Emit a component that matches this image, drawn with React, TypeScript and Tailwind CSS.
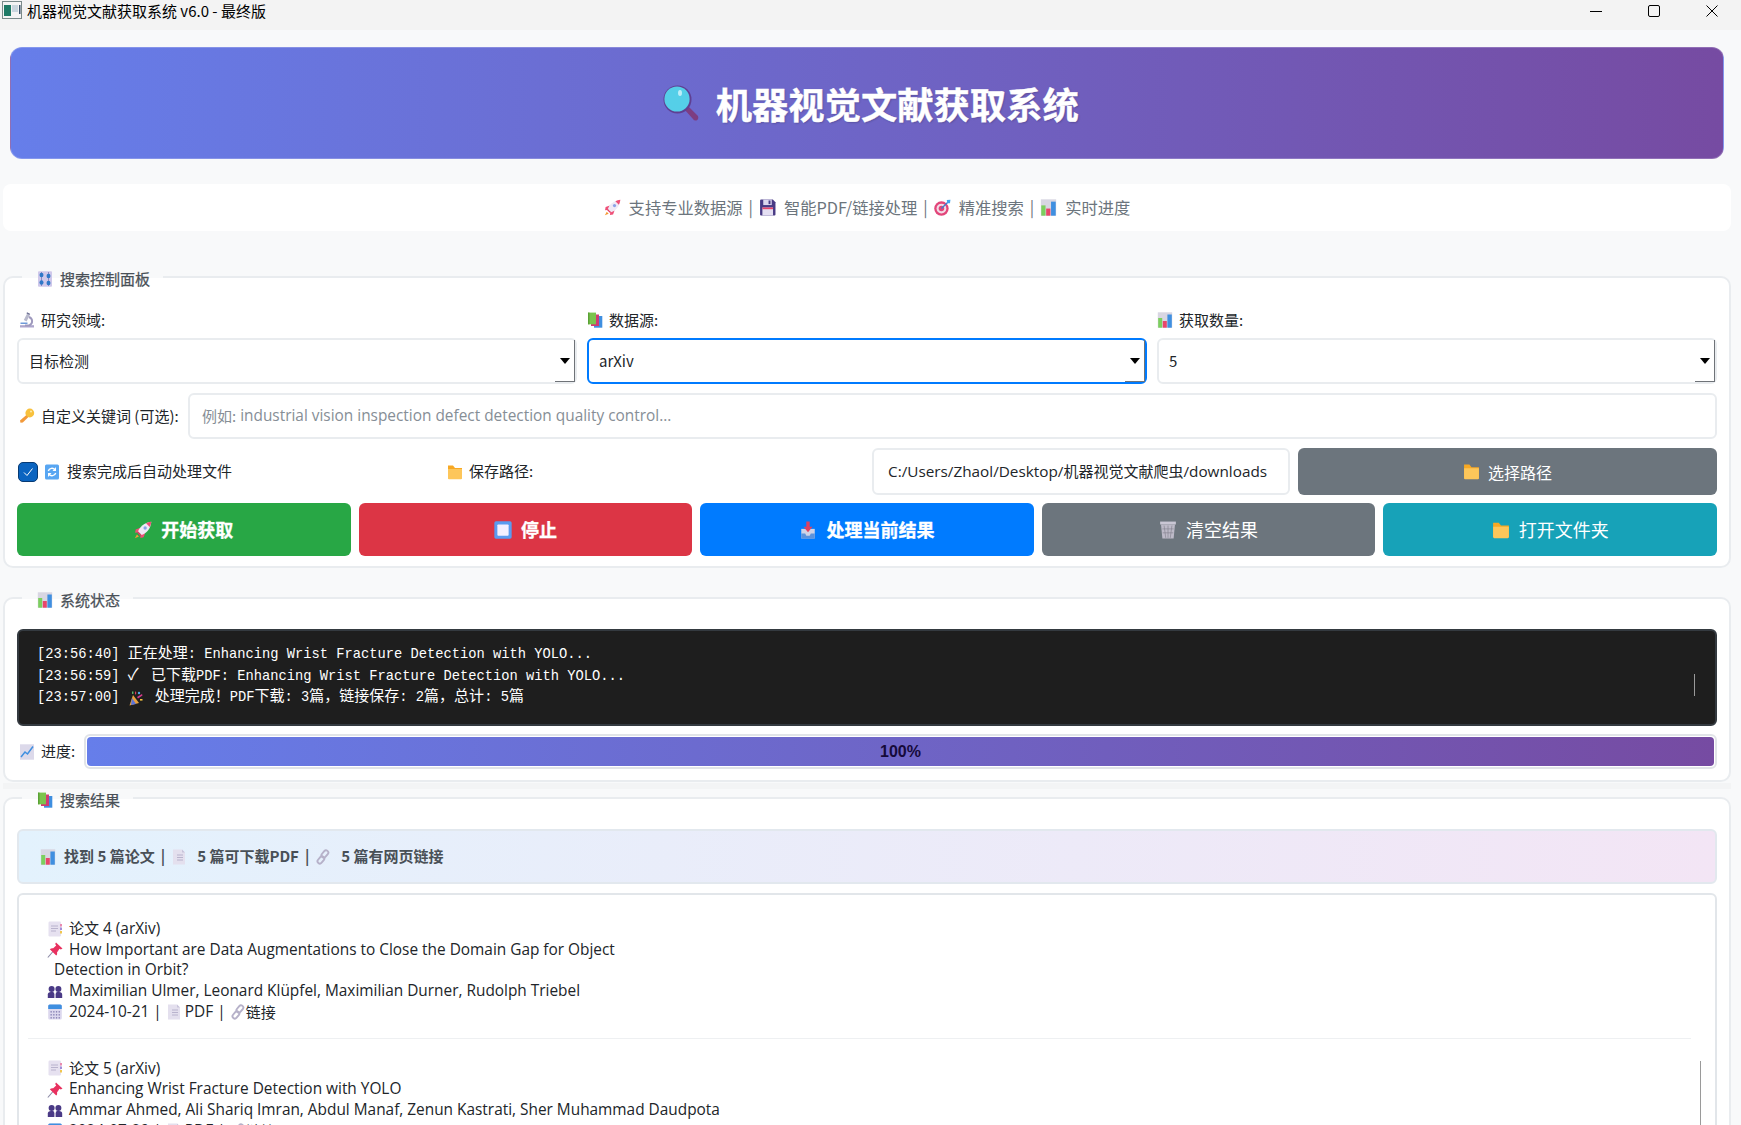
import type { ReactNode } from 'react';

type IconProps = { className?: string };

const box = 'inline-block shrink-0 w-[16px] h-[16px]';
const big = 'inline-block shrink-0 w-[17px] h-[17px]';
const btn = 'inline-block shrink-0 w-[18px] h-[18px]';

function Rocket({ className = box }: IconProps) {
  return (
    <svg viewBox="0 0 16 16" className={className}>
      <path d="M2.6 12 L0.8 15.4 L4.4 13.8 Z" fill="#f59a35" />
      <path d="M5.5 6 L1.5 7.5 L1 10.5 L4.5 10 Z" fill="#ef4f77" />
      <path d="M10 10.5 L8.5 14.5 L5.6 15 L6 11.5 Z" fill="#ef4f77" />
      <path d="M3.6 9.4 C5 5 9 1.6 15.4 0.6 C14.8 7 11 11 6.7 12.4 Z" fill="#efeaf6" />
      <path d="M15.4 0.6 C15.2 2.4 14.7 4 14 5.4 L10.7 2 C12.1 1.3 13.7 0.8 15.4 0.6 Z" fill="#ef4f77" />
      <path d="M3.6 9.4 L6.7 12.4 L5.4 13 L3 10.6 Z" fill="#e23a66" />
      <circle cx="9.9" cy="6.2" r="1.5" fill="#8aa2e6" />
    </svg>
  );
}

function Floppy({ className = box }: IconProps) {
  return (
    <svg viewBox="0 0 16 16" className={className}>
      <path d="M1 1.5 Q1 0.5 2 0.5 H13 L15.5 3 V14.5 Q15.5 15.5 14.5 15.5 H2 Q1 15.5 1 14.5 Z" fill="#483a85" />
      <rect x="4" y="0.5" width="8" height="5.2" fill="#dcd6ee" />
      <rect x="9" y="1.4" width="1.8" height="3.4" fill="#483a85" />
      <rect x="3.2" y="8" width="10" height="7.5" fill="#e4dff2" />
      <rect x="3.2" y="8" width="10" height="1.6" fill="#e8456a" />
    </svg>
  );
}

function Target({ className = box }: IconProps) {
  return (
    <svg viewBox="0 0 16 16" className={className}>
      <circle cx="7" cy="9" r="6.8" fill="#e2457a" />
      <circle cx="7" cy="9" r="4.6" fill="#f2dbe6" />
      <circle cx="7" cy="9" r="2.6" fill="#e2457a" />
      <path d="M7 9 L13 3" stroke="#3d7fd0" strokeWidth="1.2" />
      <path d="M12 1 L15.5 0.8 L15 4 L12.5 4 Z" fill="#41a5ee" />
    </svg>
  );
}

function Bars({ className = box }: IconProps) {
  return (
    <svg viewBox="0 0 16 16" className={className}>
      <rect x="0.8" y="0.3" width="14.4" height="15.4" fill="#d8d6e2" />
      <rect x="1.2" y="6" width="4" height="9.7" fill="#7ccf5e" />
      <rect x="5.8" y="9" width="4" height="6.7" fill="#e8456a" />
      <rect x="10.4" y="2.5" width="4.4" height="13.2" fill="#3f8fe0" />
    </svg>
  );
}

function Knobs({ className = box }: IconProps) {
  return (
    <svg viewBox="0 0 16 16" className={className}>
      <rect x="1" y="0.3" width="14" height="15.4" rx="1" fill="#cfc8ea" />
      {[4.5, 11.5].map((x) => (
        <g key={x}>
          <rect x={x - 0.4} y="1" width="0.8" height="14" fill="#7d78b5" />
          <ellipse cx={x} cy={x === 4.5 ? 4 : 5} rx="2" ry="2.3" fill="#2f78c8" />
          <ellipse cx={x} cy={x === 4.5 ? 11.5 : 12} rx="2" ry="2.3" fill="#2f78c8" />
        </g>
      ))}
    </svg>
  );
}

function Microscope({ className = box }: IconProps) {
  return (
    <svg viewBox="0 0 16 16" className={className}>
      <path d="M1 13.2 H15 V15.5 H1 Z" fill="#aca5cc" />
      <path d="M8.5 0.8 L11.2 2.2 L7.6 9.4 L4.8 8 Z" fill="#b8b9cc" />
      <path d="M10 5 C14 6.5 14.2 11.4 10.4 13.4 H6" fill="none" stroke="#9e99bd" strokeWidth="1.9" />
      <path d="M1.5 10.5 H8.5 V12 H1.5 Z" fill="#6f9ad8" />
      <path d="M8 0.3 L11 1.7 L10.5 2.8 L7.5 1.4 Z" fill="#6c6f92" />
    </svg>
  );
}

function Books({ className = box }: IconProps) {
  return (
    <svg viewBox="0 0 16 16" className={className}>
      <rect x="7" y="4" width="8.3" height="11.7" fill="#3f8fe0" />
      <rect x="4" y="2.5" width="8" height="11.5" fill="#d13a72" />
      <rect x="1" y="0.6" width="8" height="11.7" fill="#7cc44e" />
      <rect x="1" y="0.6" width="1.5" height="11.7" fill="#5aa235" />
    </svg>
  );
}

function KeyIcon({ className = box }: IconProps) {
  return (
    <svg viewBox="0 0 16 16" className={className}>
      <path d="M8.5 6 L1 12.5 L1.5 14.8 L3.8 14.6 L10.5 8 Z" fill="#f2993a" />
      <circle cx="10.8" cy="5" r="4.4" fill="#f8c13d" />
      <circle cx="12" cy="3.6" r="1" fill="#fbe9b0" />
    </svg>
  );
}

function Cycle({ className = box }: IconProps) {
  return (
    <svg viewBox="0 0 16 16" className={className}>
      <rect x="1" y="0.5" width="14" height="15" rx="1.5" fill="#58a6f2" />
      <path d="M4.3 7 A3.8 3.8 0 0 1 11 5.8" fill="none" stroke="#fff" strokeWidth="1.4" />
      <path d="M12 3 V7 H8.5 Z" fill="#fff" />
      <path d="M11.7 9 A3.8 3.8 0 0 1 5 10.2" fill="none" stroke="#fff" strokeWidth="1.4" />
      <path d="M4 13 V9 H7.5 Z" fill="#fff" />
    </svg>
  );
}

function Folder({ className = box }: IconProps) {
  return (
    <svg viewBox="0 0 16 16" className={className}>
      <path d="M1 1.5 H6 L8 4 H15 V14.5 H1 Z" fill="#f7a823" />
      <path d="M1 5 H15 V14 Q15 15.3 14 15.3 H2 Q1 15.3 1 14 Z" fill="#fdc65a" />
    </svg>
  );
}

function StopIcon({ className = box }: IconProps) {
  return (
    <svg viewBox="0 0 16 16" className={className}>
      <rect x="0.3" y="0.3" width="15.4" height="15.4" rx="1.5" fill="#5a9bf0" />
      <rect x="3" y="3" width="10" height="10" rx="0.8" fill="#f4f0ff" />
    </svg>
  );
}

function Inbox({ className = box }: IconProps) {
  return (
    <svg viewBox="0 0 16 16" className={className}>
      <path d="M2 7 H14 V15.5 H2 Z" fill="#cfd3e6" />
      <path d="M2 11 H5.5 L6.5 13 H9.5 L10.5 11 H14 V15.5 H2 Z" fill="#5b93dd" />
      <path d="M6.5 0.5 H9.5 V5 H12 L8 10 L4 5 H6.5 Z" fill="#e2405f" />
    </svg>
  );
}

function Trash({ className = box }: IconProps) {
  return (
    <svg viewBox="0 0 16 16" className={className}>
      <rect x="1" y="0.5" width="14" height="2.6" fill="#c9c6d4" />
      <path d="M1.8 3 H14.2 L13 15.5 H3 Z" fill="#bdbac8" />
      <path d="M4.5 4 L6 15 M8 4 V15 M11.5 4 L10 15 M3 7 H13 M3.3 10.5 H12.7" stroke="#85838f" strokeWidth="0.6" />
    </svg>
  );
}

function Party({ className = box }: IconProps) {
  return (
    <svg viewBox="0 0 16 16" className={className}>
      <path d="M5 5 L11 13 L1.5 15.5 Z" fill="#e8a13c" />
      <path d="M4 8 L8 14 L3 15 Z" fill="#5b73d8" />
      <path d="M7 1 L8.5 3 L7 5 Z" fill="#e2405f" />
      <circle cx="11" cy="3" r="1.2" fill="#4fa8e8" />
      <path d="M9 7 L14 4 L14.5 5.5 L10 8.5 Z" fill="#d53a8a" />
      <rect x="12" y="9" width="2.5" height="1.6" fill="#f3c23f" />
      <rect x="4" y="1.5" width="1.4" height="2.4" fill="#59bb6a" />
    </svg>
  );
}

function Trend({ className = box }: IconProps) {
  return (
    <svg viewBox="0 0 16 16" className={className}>
      <rect x="1" y="0.3" width="14" height="15.4" fill="#dcd9ea" />
      <path d="M2 13 L6 8 L8.5 10 L14 2.5" fill="none" stroke="#3f8fe0" strokeWidth="1.5" />
    </svg>
  );
}

function Page({ className = box }: IconProps) {
  return (
    <svg viewBox="0 0 16 16" className={className}>
      <path d="M2 0.5 H11 L14 3.5 V15.5 H2 Z" fill="#e4e0ee" />
      <path d="M11 0.5 L14 3.5 H11 Z" fill="#c8c3da" />
      <path d="M6 6 H12 M6 8.5 H12 M6 11 H12" stroke="#b3aec8" strokeWidth="0.9" />
    </svg>
  );
}

function Tabs({ className = box }: IconProps) {
  return (
    <svg viewBox="0 0 16 16" className={className}>
      <rect x="1.5" y="0.5" width="12.5" height="15" rx="1.2" fill="#e6e1f0" />
      <path d="M4 5 H11 M4 7.5 H11 M4 10 H9" stroke="#b3aec8" strokeWidth="0.9" />
      <rect x="13" y="3" width="2" height="2.5" fill="#e98bb0" />
      <rect x="13" y="6.5" width="2" height="2.5" fill="#a08ed8" />
      <rect x="13" y="10" width="2" height="2.5" fill="#f0c64f" />
    </svg>
  );
}

function LinkIcon({ className = box }: IconProps) {
  return (
    <svg viewBox="0 0 16 16" className={className}>
      <g fill="none" stroke="#b6b1c9" strokeWidth="1.9">
        <rect x="7.6" y="1" width="4.6" height="8" rx="2.3" transform="rotate(40 10 5)" />
        <rect x="3.6" y="7" width="4.6" height="8" rx="2.3" transform="rotate(40 6 11)" />
      </g>
    </svg>
  );
}

function Pin({ className = box }: IconProps) {
  return (
    <svg viewBox="0 0 16 16" className={className}>
      <path d="M0.8 15.5 L6 9.5" stroke="#8c8aa6" strokeWidth="1.1" />
      <path d="M9 0.5 L15.5 6.5 L13.8 7.6 L12.5 6.8 L10 10.5 C10.4 12 10 13 9.2 13.6 L2.8 7.2 C3.8 6.2 5 6 6.2 6.2 L9.2 3.6 L8.2 2 Z" fill="#e8315f" />
    </svg>
  );
}

function Users({ className = box }: IconProps) {
  return (
    <svg viewBox="0 0 16 16" className={className}>
      <g fill="#4a3a86">
        <circle cx="4.6" cy="6" r="3" />
        <circle cx="11.4" cy="6" r="3" />
        <path d="M0.8 15 V11.5 Q0.8 9 4 9 H6 Q7.4 9 7.4 11.5 V15 Z" />
        <path d="M8.6 15 V11.5 Q8.6 9 10 9 H12 Q15.2 9 15.2 11.5 V15 Z" />
      </g>
    </svg>
  );
}

function Calendar({ className = box }: IconProps) {
  return (
    <svg viewBox="0 0 16 16" className={className}>
      <rect x="1.2" y="0.5" width="13.6" height="15" rx="1.5" fill="#dcd8ee" />
      <path d="M1.2 2 Q1.2 0.5 2.7 0.5 H13.3 Q14.8 0.5 14.8 2 V5 H1.2 Z" fill="#3f8fe0" />
      {[4, 7, 10].map((y) =>
        [3.5, 6.2, 8.9, 11.6].map((x) => <rect key={`${x}-${y + 3}`} x={x} y={y + 3} width="1.3" height="1.6" fill="#8e88b8" />)
      )}
    </svg>
  );
}

function TitleLens() {
  return (
    <svg viewBox="0 0 36 36" className="w-[36px] h-[36px] shrink-0">
      <path d="M21 24 L25 21 L35 31 Q36 34 33.5 35.5 Q31 36 30 34 Z" fill="#7d3d82" />
      <circle cx="14.5" cy="14.5" r="14" fill="#5f3f92" />
      <circle cx="14" cy="14" r="12.6" fill="#55cfe8" />
      <ellipse cx="17" cy="8" rx="2" ry="3" fill="#bdeef8" />
    </svg>
  );
}

function AppIcon() {
  return (
    <svg viewBox="0 0 20 18" className="w-[20px] h-[18px] shrink-0">
      <rect x="0.5" y="0.5" width="19" height="17" fill="#f4f4f4" stroke="#7a8a8a" />
      <rect x="2" y="4" width="7" height="11" fill="#1e7a66" />
      <rect x="10" y="4" width="6" height="7" fill="#c9d6de" />
      <rect x="17" y="4" width="1.5" height="9" fill="#38506a" />
    </svg>
  );
}

function Legend({ icon, children }: { icon: ReactNode; children: ReactNode }) {
  return (
    <div className="absolute left-[17px] top-[-9px] h-[20px] pl-[15px] pr-[13px] flex items-center gap-[7px] bg-[linear-gradient(to_bottom,#f8f9fa_0,#f8f9fa_9px,#ffffff_9px)] text-[15px] text-[#495057] [-webkit-text-stroke:0.25px_#495057]">
      {icon}
      <span>{children}</span>
    </div>
  );
}

function FieldLabel({ icon, children, className = '' }: { icon: ReactNode; children: ReactNode; className?: string }) {
  return (
    <div className={`flex items-center gap-[6px] h-[20px] text-[15px] text-[#212529] ${className}`}>
      {icon}
      <span>{children}</span>
    </div>
  );
}

function SelectBox({ value, focused }: { value: string; focused?: boolean }) {
  return (
    <div
      className={`mt-[8px] h-[46px] flex items-stretch rounded-[6px] border-2 bg-white text-[15px] text-[#212529] ${
        focused ? 'border-[#007bff]' : 'border-[#e9ecef]'
      }`}
    >
      <div className="flex-1 flex items-center pl-[10px]">{value}</div>
      <div className="w-[20px] flex items-center justify-center border-r-[1.5px] border-b-[1.5px] border-[#6f7378]">
        <div className="w-0 h-0 border-l-[5px] border-r-[5px] border-t-[6px] border-l-transparent border-r-transparent border-t-black" />
      </div>
    </div>
  );
}

function ActionButton({
  icon,
  label,
  color,
  bold,
}: {
  icon: ReactNode;
  label: string;
  color: string;
  bold?: boolean;
}) {
  return (
    <button
      className={`h-[53px] rounded-[6px] flex items-center justify-center gap-[9px] text-white text-[18px] ${color} ${
        bold ? 'font-bold [-webkit-text-stroke:0.3px_#ffffff]' : ''
      }`}
    >
      {icon}
      <span>{label}</span>
    </button>
  );
}

function Sep({ className = 'mx-[4px]' }: { className?: string }) {
  return <span className={className}>|</span>;
}

function Paper({ no, title, authors, date }: { no: number; title: string[]; authors: string; date: string }) {
  return (
    <div className="text-[15.4px] leading-[20.7px] text-[#212529] font-['Open_Sans','Noto_Sans_CJK_SC',sans-serif]">
      <div className="flex items-center gap-[6px]">
        <Tabs />
        <span>
          <span className="text-[15px]">论文</span> {no} (arXiv)
        </span>
      </div>
      <div className="flex items-center gap-[6px]">
        <Pin />
        <span>{title[0]}</span>
      </div>
      {title[1] && <div className="ml-[7px]">{title[1]}</div>}
      <div className="flex items-center gap-[6px]">
        <Users />
        <span>{authors}</span>
      </div>
      <div className="flex items-center gap-[6px]">
        <Calendar />
        <span className="flex items-center">
          {date}
          <Sep />
          <Page />
          <span className="ml-[3px]">PDF</span>
          <Sep />
          <LinkIcon />
          <span className="text-[15px]">链接</span>
        </span>
      </div>
    </div>
  );
}

export default function App() {
  return (
    <div className="w-[1741px] h-[1125px] overflow-hidden bg-[#f8f9fa] font-['Noto_Sans_CJK_SC','Noto_Sans',sans-serif]">
      {/* title bar */}
      <div className="h-[30px] bg-[#f3f3f3] flex items-start pl-[2px] pt-[1px] text-[15px] leading-[20px] text-black">
        <AppIcon />
        <span className="ml-[5px]">机器视觉文献获取系统 v6.0 - 最终版</span>
        <div className="ml-auto h-[20px] flex items-center gap-[46px] pr-[23px] text-black">
          <div className="w-[12px] h-[1px] bg-black" />
          <div className="w-[12px] h-[12px] border border-black rounded-[2px]" />
          <svg viewBox="0 0 12 12" className="w-[12px] h-[12px]">
            <path d="M0.5 0.5 L11.5 11.5 M11.5 0.5 L0.5 11.5" stroke="#000" strokeWidth="1" />
          </svg>
        </div>
      </div>

      <div className="pl-[3px] pr-[10px]">
        {/* banner */}
        <div className="mt-[17px] ml-[6.5px] mr-[7px] h-[112px] pl-[8px] rounded-[12px] border border-white/20 bg-[linear-gradient(90deg,#667eea,#764ba2)] flex items-center justify-center gap-[17px]">
          <TitleLens />
          <h1 className="text-[36.3px] font-bold text-white [-webkit-text-stroke:0.4px_#ffffff] [text-shadow:1px_1px_2px_rgba(0,0,0,0.2)]">机器视觉文献获取系统</h1>
        </div>

        <div className="mt-[25px] h-[47px] rounded-[8px] bg-white flex items-center justify-center text-[16.3px] text-[#6c757d]">
          <Rocket className={big} />
          <span className="ml-[8px]">支持专业数据源</span>
          <Sep className="mx-[6px]" />
          <Floppy className={big} />
          <span className="ml-[8px]">智能PDF/链接处理</span>
          <Sep className="mx-[6px]" />
          <Target className={big} />
          <span className="ml-[8px]">精准搜索</span>
          <Sep className="mx-[6px]" />
          <Bars className={big} />
          <span className="ml-[8px]">实时进度</span>
        </div>

        {/* search panel */}
        <section className="relative mt-[45px] border-2 border-[#e9ecef] rounded-[10px] bg-white px-[12px] pt-[32px] pb-[10px]">
          <Legend icon={<Knobs />}>搜索控制面板</Legend>
          <div className="grid grid-cols-3 gap-[10px]">
            <div>
              <FieldLabel icon={<Microscope />} className="pl-[2px]">研究领域:</FieldLabel>
              <SelectBox value="目标检测" />
            </div>
            <div>
              <FieldLabel icon={<Books />}>数据源:</FieldLabel>
              <SelectBox value="arXiv" focused />
            </div>
            <div>
              <FieldLabel icon={<Bars />}>获取数量:</FieldLabel>
              <SelectBox value="5" />
            </div>
          </div>

          <div className="mt-[9px] h-[46px] flex items-center">
            <FieldLabel icon={<KeyIcon />} className="pl-[2px] w-[171px] shrink-0">自定义关键词 (可选):</FieldLabel>
            <div className="flex-1 h-full rounded-[6px] border-2 border-[#e9ecef] bg-white flex items-center pl-[12px] text-[15.4px] text-[#868e96] font-['Open_Sans','Noto_Sans_CJK_SC',sans-serif]">
              <span className="text-[15px] font-['Noto_Sans_CJK_SC',sans-serif]">例如:</span>&nbsp;industrial vision inspection defect detection quality control...
            </div>
          </div>

          <div className="mt-[9px] h-[47px] flex items-center">
            <div className="w-[430px] shrink-0 flex items-center pl-[1px] gap-[6px] text-[15px] text-[#212529]">
              <span className="w-[20px] h-[20px] rounded-[5px] bg-[#0b64c0] border border-[#073a73] flex items-center justify-center">
                <svg viewBox="0 0 12 12" className="w-[12px] h-[12px]">
                  <path d="M2 6.5 L5 9.5 L10.5 2.5" fill="none" stroke="#fff" strokeWidth="1" />
                </svg>
              </span>
              <Cycle />
              <span className="ml-[1px]">搜索完成后自动处理文件</span>
            </div>
            <FieldLabel icon={<Folder />} className="w-[425px] shrink-0">保存路径:</FieldLabel>
            <div className="w-[418px] h-full rounded-[6px] border-2 border-[#e9ecef] bg-white flex items-center pl-[14px] text-[15.3px] text-[#212529] whitespace-nowrap font-['Open_Sans','Noto_Sans_CJK_SC',sans-serif]">
              C:/Users/Zhaol/Desktop/<span className="text-[15px]">机器视觉文献爬虫</span>/downloads
            </div>
            <button className="ml-[8px] flex-1 h-full rounded-[6px] bg-[#6c757d] flex items-center justify-center gap-[8px] text-[16px] text-white">
              <Folder className={big} />
              <span>选择路径</span>
            </button>
          </div>

          <div className="mt-[8px] grid grid-cols-5 gap-[8px]">
            <ActionButton icon={<Rocket className={btn} />} label="开始获取" color="bg-[#28a745]" bold />
            <ActionButton icon={<StopIcon className={btn} />} label="停止" color="bg-[#dc3545]" bold />
            <ActionButton icon={<Inbox className={btn} />} label="处理当前结果" color="bg-[#007bff]" bold />
            <ActionButton icon={<Trash className={btn} />} label="清空结果" color="bg-[#6c757d]" />
            <ActionButton icon={<Folder className={btn} />} label="打开文件夹" color="bg-[#17a2b8]" />
          </div>
        </section>

        {/* status */}
        <section className="relative mt-[29px] border-2 border-[#e9ecef] rounded-[10px] bg-white px-[12px] pt-[30px] pb-[11px]">
          <Legend icon={<Bars />}>系统状态</Legend>
          <div className="relative h-[97px] rounded-[6px] border-2 border-[#343a40] bg-[#1e1e1e] pl-[18px] pt-[14px] text-[13.75px] leading-[20.8px] text-white font-['Liberation_Mono','Noto_Sans_CJK_SC',monospace] whitespace-pre">
            <div>
              [23:56:40] <span className="text-[15px]">正在处理</span>: Enhancing Wrist Fracture Detection with YOLO...
            </div>
            <div>
              [23:56:59] <span className="text-[16px]">✓</span> <span className="text-[15px] ml-[4px]">已下载</span>PDF: Enhancing Wrist Fracture Detection with YOLO...
            </div>
            <div className="flex items-center">
              <span>[23:57:00] </span>
              <Party />
              <span className="ml-[11px]">
                <span className="text-[15px]">处理完成！</span>PDF<span className="text-[15px]">下载</span>: 3<span className="text-[15px]">篇，链接保存</span>: 2<span className="text-[15px]">篇，总计</span>: 5<span className="text-[15px]">篇</span>
              </span>
            </div>
            <div className="absolute right-[20px] top-[43px] w-[1px] h-[22px] bg-[#9a9a9a]" />
          </div>
          <div className="mt-[8px] h-[35px] flex items-center">
            <FieldLabel icon={<Trend />} className="pl-[2px] w-[67px] shrink-0">进度:</FieldLabel>
            <div className="flex-1 h-full rounded-[6px] border-2 border-[#e1e4e8] bg-white p-[1px]">
              <div className="h-full rounded-[4px] bg-[linear-gradient(90deg,#667eea,#764ba2)] flex items-center justify-center text-[16px] font-bold text-[#160a3a] font-['Liberation_Sans',sans-serif]">
                100%
              </div>
            </div>
          </div>
        </section>

        <div className="mt-[1px] h-[6px] bg-[#f3f4f5]" />

        {/* results */}
        <section className="relative mt-[8px] h-[400px] border-2 border-[#e9ecef] rounded-t-[10px] bg-white px-[12px] pt-[30px]">
          <Legend icon={<Books />}>搜索结果</Legend>
          <div className="h-[55px] rounded-[6px] border-2 border-[#e2e8ee] bg-[linear-gradient(90deg,#e3f2fd,#f3e5f5)] flex items-center pl-[21px] text-[15px] font-bold text-[#495057]">
            <Bars />
            <span className="ml-[8px]">找到 5 篇论文</span>
            <Sep className="mx-[6px]" />
            <Page />
            <span className="ml-[10px]">5 篇可下载PDF</span>
            <Sep className="mx-[6px]" />
            <LinkIcon />
            <span className="ml-[10px]">5 篇有网页链接</span>
          </div>

          <div className="relative mt-[9px] h-[300px] rounded-[6px] border-2 border-[#e2e6ea] bg-white pt-[23px]">
            <div className="pl-[28px]">
              <Paper
                no={4}
                title={['How Important are Data Augmentations to Close the Domain Gap for Object', 'Detection in Orbit?']}
                authors="Maximilian Ulmer, Leonard Klüpfel, Maximilian Durner, Rudolph Triebel"
                date="2024-10-21"
              />
            </div>
            <div className="mt-[15px] mx-[9px] w-[1663px] h-[1px] bg-[#eef0f2]" />
            <div className="mt-[19px] pl-[28px]">
              <Paper
                no={5}
                title={['Enhancing Wrist Fracture Detection with YOLO']}
                authors="Ammar Ahmed, Ali Shariq Imran, Abdul Manaf, Zenun Kastrati, Sher Muhammad Daudpota"
                date="2024-07-29"
              />
            </div>
            <div className="absolute right-[14px] top-[166px] w-[1px] h-[120px] bg-[#9a9a9a]" />
          </div>
        </section>
      </div>
    </div>
  );
}
